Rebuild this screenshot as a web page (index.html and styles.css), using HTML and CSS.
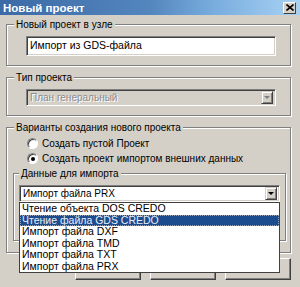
FILE: index.html
```html
<!DOCTYPE html>
<html lang="ru">
<head>
  <meta charset="UTF-8" />
  <title>Новый проект</title>
  <link rel="stylesheet" href="styles.css">
</head>
<body>
  <div class="titlebar">
    <span class="title">Новый проект</span>
    <span class="close">
      <svg width="8" height="7" viewBox="0 0 8 7"><path d="M0.5 0.5 L7.5 6.5 M7.5 0.5 L0.5 6.5" stroke="#000" stroke-width="1.6"/></svg>
    </span>
  </div>

  <fieldset class="group first">
    <legend>Новый проект в узле</legend>
    <div class="edit">Импорт из GDS-файла</div>
  </fieldset>

  <fieldset class="group">
    <legend>Тип проекта</legend>
    <div class="combo disabled">
      <span class="value">План генеральный</span>
      <span class="arrow"><i></i></span>
    </div>
  </fieldset>

  <fieldset class="group options">
    <legend>Варианты создания нового проекта</legend>
    <div class="radio"><span class="dot"></span>Создать пустой Проект</div>
    <div class="radio"><span class="dot checked"></span>Создать проект импортом внешних данных</div>

    <fieldset class="group sub">
      <legend>Данные для импорта</legend>
      <div class="combo open">
        <span class="value">Импорт файла PRX</span>
        <span class="arrow"><i></i></span>
        <ul class="dropdown">
          <li>Чтение объекта DOS CREDO</li>
          <li class="selected">Чтение файла GDS CREDO</li>
          <li>Импорт файла DXF</li>
          <li>Импорт файла TMD</li>
          <li>Импорт файла TXT</li>
          <li>Импорт файла PRX</li>
        </ul>
      </div>
    </fieldset>
  </fieldset>

  <!-- dialog buttons, mostly hidden behind the open list -->
  <div class="buttons">
    <button class="btn" aria-label="OK"></button>
    <button class="btn" aria-label="Отмена"></button>
    <button class="btn" aria-label="Справка"></button>
  </div>
</body>
</html>
```

FILE: styles.css
```css
* { box-sizing: border-box; }
html, body { margin: 0; padding: 0; height: 100%; }
body {
  background: #d4d0c8;
  font-family: "Liberation Sans", Arial, sans-serif;
  font-size: 10px;
  color: #000;
  overflow: hidden;
}

.titlebar {
  height: 15px;
  display: flex;
  align-items: center;
  justify-content: space-between;
  padding: 0 4px 0 3px;
  background: linear-gradient(to right, #3b6aa6 0%, #5486be 50%, #7aaedf 72%, #a8d2f3 100%);
}

.title {
  color: #fff;
  font-weight: bold;
  font-size: 11.5px;
}

.close {
  width: 13px;
  height: 12px;
  background: #d4d0c8;
  border: 1px solid;
  border-color: #fff #404040 #404040 #fff;
  display: flex;
  align-items: center;
  justify-content: center;
}

.group {
  margin: 5px 9px 0 6px;
  padding: 5px 14px 9px 7px;
  border: 1px solid #808080;
  box-shadow: 1px 1px 0 #fff, inset 1px 1px 0 #fff;
  min-width: 0;
}

.group.first { margin-top: 3px; }

.group legend {
  padding: 0 2px;
  line-height: 13px;
  background: #d4d0c8;
}

.edit {
  margin-left: 12px;
  height: 20px;
  line-height: 17px;
  padding: 0 3px;
  font-size: 10.5px;
  background: #fff;
  border: 1px solid;
  border-color: #808080 #fff #fff #808080;
  box-shadow: inset 1px 1px 0 #404040, inset -1px -1px 0 #d4d0c8;
}

.combo {
  position: relative;
  margin-left: 12px;
  height: 17px;
  display: flex;
  align-items: center;
  padding: 0 2px 0 3px;
  background: #fff;
  border: 1px solid;
  border-color: #808080 #fff #fff #808080;
  box-shadow: inset 1px 1px 0 #404040, inset -1px -1px 0 #d4d0c8;
}

.combo .value { flex: 1; line-height: 13px; }

.combo.disabled { background: #d4d0c8; }
.combo.disabled .value { color: #8c8c8c; text-shadow: 1px 1px 0 #fff; }

.arrow {
  width: 12px;
  height: 13px;
  display: flex;
  align-items: center;
  justify-content: center;
  background: #d4d0c8;
  border: 1px solid;
  border-color: #d4d0c8 #404040 #404040 #d4d0c8;
  box-shadow: inset 1px 1px 0 #fff, inset -1px -1px 0 #808080;
}

.arrow i {
  width: 0;
  height: 0;
  border-left: 3px solid transparent;
  border-right: 3px solid transparent;
  border-top: 3px solid #000;
}

.combo.disabled .arrow i { border-top-color: #808080; }

.options { padding: 2px 4px 11px 7px; }

.radio {
  height: 15px;
  display: flex;
  align-items: center;
  padding-left: 13px;
}

.dot {
  width: 11px;
  height: 11px;
  margin-right: 4px;
  border-radius: 50%;
  background: #fff;
  border: 1px solid;
  border-color: #808080 #fff #fff #808080;
  box-shadow: inset 1px 1px 0 #404040;
  display: flex;
  align-items: center;
  justify-content: center;
}

.dot.checked::after {
  content: "";
  width: 4px;
  height: 4px;
  border-radius: 50%;
  background: #000;
}

.sub {
  margin: 1px 0 0 -1px;
  padding: 5px 5px 38px 5px;
}

.sub .combo { margin-left: 0; }

.dropdown {
  position: absolute;
  top: calc(100% + 1px);
  left: -1px;
  right: -1px;
  height: 71px;
  margin: 0;
  padding: 0;
  list-style: none;
  background: #fff;
  border: 1px solid #404040;
  font-size: 10.5px;
  z-index: 2;
}

.dropdown li {
  height: 11.5px;
  line-height: 11.5px;
  padding-left: 2px;
  white-space: nowrap;
}

.dropdown li.selected {
  background: #1c4b8e;
  color: #e8eef8;
  outline: 1px dotted #9aa6b8;
  outline-offset: -1px;
}

.buttons {
  display: flex;
  justify-content: flex-end;
  gap: 9px;
  margin: 5px 9px 0 0;
}

.btn {
  width: 66px;
  height: 22px;
  font: inherit;
  background: #d4d0c8;
  border: 1px solid;
  border-color: #fff #404040 #404040 #fff;
  box-shadow: inset -1px -1px 0 #808080;
  padding: 0;
}
```
